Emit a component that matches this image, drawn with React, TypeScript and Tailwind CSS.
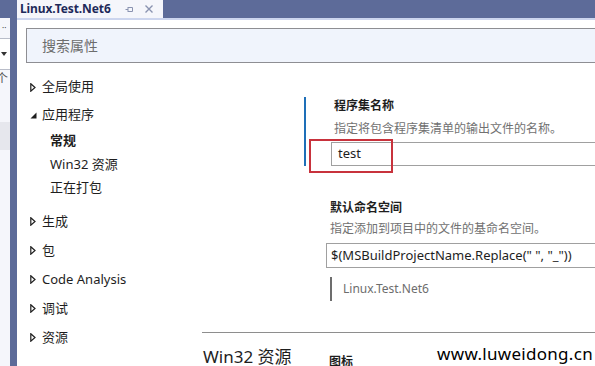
import React from "react";

const font = { fontFamily: '"Noto Sans", "Noto Sans CJK SC", sans-serif' };

const Collapsed = () => (
  <svg width="6" height="9" viewBox="0 0 6 9" className="shrink-0">
    <path d="M0.8 0.8 L5 4.5 L0.8 8.2 Z" fill="none" stroke="#1e1e1e" strokeWidth="1.2" />
  </svg>
);

const Expanded = () => (
  <svg width="7" height="7" viewBox="0 0 7 7" className="shrink-0">
    <path d="M6.5 0.5 L6.5 6.5 L0.5 6.5 Z" fill="#1e1e1e" />
  </svg>
);

const NavItem = ({ label, open, h }: { label: string; open?: boolean; h: string }) => (
  <div className={`flex items-center pl-[13px] gap-[6px] text-[13px] text-[#1e1e1e] ${h}`}>
    <span className="w-[6px] flex justify-center">{open ? <Expanded /> : <Collapsed />}</span>
    <span>{label}</span>
  </div>
);

const SubItem = ({ label, bold, h }: { label: string; bold?: boolean; h: string }) => (
  <div className={`flex items-center pl-[33px] text-[13px] text-[#1e1e1e] ${h} ${bold ? "font-bold" : ""}`}>
    {label}
  </div>
);

export default function App() {
  return (
    <div className="w-[595px] h-[366px] overflow-hidden flex bg-white relative" style={font}>
      {/* neighbouring tool window */}
      <div className="w-[10px] flex flex-col bg-[#f5f6fb] shrink-0 overflow-hidden">
        <div className="h-[18px] bg-[#5d6b99]" />
        <div className="h-[20px] text-[8px] leading-[20px] text-[#444] pl-[2px]">··</div>
        <div className="h-[32px] border-y border-[#b9bdc9] bg-white flex items-center pl-[1px]">
          <svg width="6" height="4" viewBox="0 0 6 4">
            <path d="M0 0 L6 0 L3 4 Z" fill="#333" />
          </svg>
        </div>
        <div className="h-[18px] text-[12px] leading-[18px] text-[#555] -ml-[4px] whitespace-nowrap">个</div>
        <div className="h-[34px]" />
        <div className="h-[28px] bg-[#e6e7ed]" />
      </div>
      <div className="w-[7px] bg-[#5d6b99] shrink-0" />

      <div className="flex-1 flex flex-col min-w-0">
        {/* tab bar */}
        <div className="h-[18px] bg-[#5d6b99] flex shrink-0">
          <div className="w-[146px] bg-[#f5f6fb] flex items-center pl-[3px]">
            <span className="text-[12px] font-bold text-[#1e2a5a] leading-none tracking-[-0.1px]">Linux.Test.Net6</span>
            <svg width="9" height="9" viewBox="0 0 9 9" className="ml-[14px]">
              <path d="M0.5 4.5 H3 M3 2 V7 M3 2.5 H7.5 V6.5 H3" fill="none" stroke="#8a93b0" strokeWidth="1" />
            </svg>
            <svg width="10" height="10" viewBox="0 0 10 10" className="ml-[10px]">
              <path d="M1.5 1.5 L8.5 8.5 M8.5 1.5 L1.5 8.5" stroke="#8a93b0" strokeWidth="1.4" />
            </svg>
          </div>
        </div>
        <div className="h-[2px] bg-[#ccd5ee] shrink-0" />

        {/* search */}
        <div className="pl-[9px] pt-[8px] shrink-0">
          <div className="h-[35px] border-y border-l border-[#8e8e93] bg-[#f0f4fc] flex items-center pl-[15px] text-[14px] text-[#6d6d6d]">
            搜索属性
          </div>
        </div>

        <div className="flex flex-1 min-h-0">
          {/* nav */}
          <div className="w-[185px] shrink-0 pt-[10px]">
            <NavItem label="全局使用" h="h-[28px]" />
            <NavItem label="应用程序" open h="h-[28px]" />
            <SubItem label="常规" bold h="h-[24px]" />
            <SubItem label="Win32 资源" h="h-[23px]" />
            <SubItem label="正在打包" h="h-[24px]" />
            <div className="h-[7px]" />
            <NavItem label="生成" h="h-[29px]" />
            <NavItem label="包" h="h-[29px]" />
            <NavItem label="Code Analysis" h="h-[29px]" />
            <NavItem label="调试" h="h-[29px]" />
            <NavItem label="资源" h="h-[29px]" />
          </div>

          {/* properties */}
          <div className="flex-1 flex flex-col min-w-0">
            <div className="pl-[102px] pt-[34px]">
              <div className="relative border-l-2 border-[#1e6fb8] pl-[25px] h-[69px]">
                <div className="pl-[3px] text-[12px] font-bold text-[#1e1e1e] leading-[18px]">程序集名称</div>
                <div className="pl-[3px] text-[12px] text-[#717171] leading-[20px] mt-[4px]">指定将包含程序集清单的输出文件的名称。</div>
                <div className="mt-[3px] h-[24px] border-y border-l border-[#a0a0a0] flex items-center pl-[6px] text-[13px] text-[#1e1e1e]">
                  test
                </div>
                <div className="absolute left-[3px] top-[42px] w-[84px] h-[34px] border-2 border-[#c8323c]" />
              </div>
            </div>

            <div className="pl-[124px] pt-[33px]">
              <div className="pl-[4px] text-[12px] font-bold text-[#1e1e1e] leading-[18px]">默认命名空间</div>
              <div className="pl-[4px] text-[12px] text-[#717171] leading-[20px] mt-[2px]">指定添加到项目中的文件的基命名空间。</div>
              <div className="mt-[4px] h-[25px] border-y border-l border-[#a0a0a0] flex items-center pl-[4px] text-[13px] text-[#1e1e1e] whitespace-nowrap overflow-hidden">
                $(MSBuildProjectName.Replace(" ", "_"))
              </div>
              <div className="ml-[4px] mt-[9px] h-[24px] border-l-2 border-[#6d6d6d] pl-[11px] flex items-center text-[12px] text-[#6d6d6d]">
                Linux.Test.Net6
              </div>
            </div>

            <div className="mt-[31px] border-t border-[#8e8e8e]" />
            <div className="flex items-start">
              <div className="w-[127px] pl-[1px] pt-[14px] text-[17px] text-[#1e1e1e] leading-[20px] whitespace-nowrap">Win32 资源</div>
              <div className="pt-[22px] text-[12px] font-bold text-[#1e1e1e] leading-[14px]">图标</div>
            </div>
          </div>
        </div>
      </div>

      {/* watermark */}
      <div className="absolute right-[2px] top-[343px] text-[17px] text-black leading-[22px] tracking-[0.3px]">
        www.luweidong.cn
      </div>
    </div>
  );
}
